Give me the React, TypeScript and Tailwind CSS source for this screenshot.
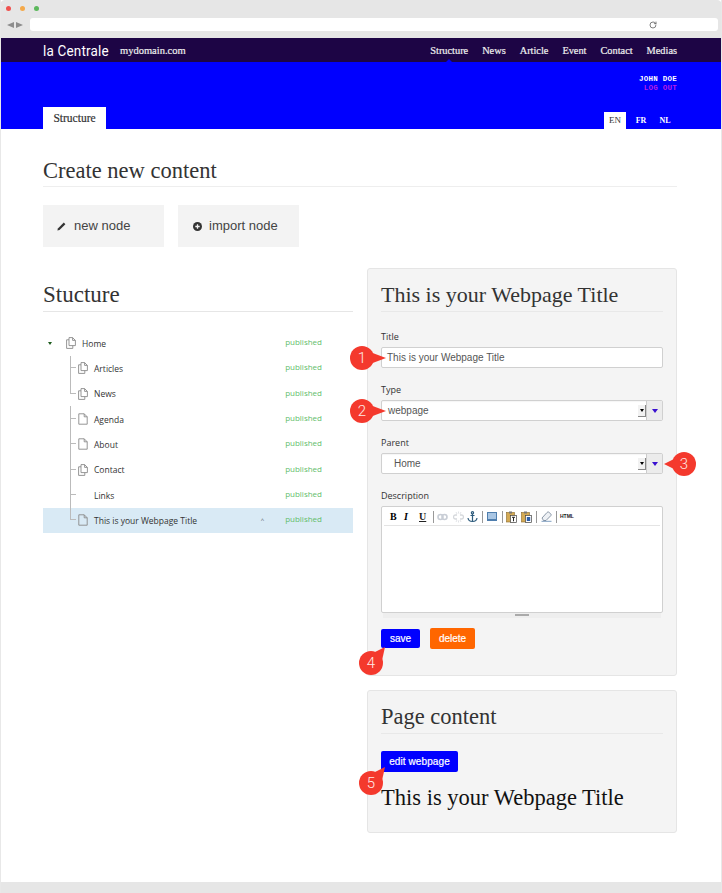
import { RotateCw } from "lucide-react";

const serif = "[font-family:'Liberation_Serif',serif]";

const treeRows = [
  { label: "Articles", icon: "pages", line: "mid" },
  { label: "News", icon: "pages", line: "end" },
  { label: "Agenda", icon: "page", line: "mid" },
  { label: "About", icon: "page", line: "mid" },
  { label: "Contact", icon: "pages", line: "mid" },
  { label: "Links", icon: "none", line: "mid" },
  { label: "This is your Webpage Title", icon: "page", line: "end", active: true },
];

const PageIcon = () => (
  <svg width="10" height="12" viewBox="0 0 10 12" fill="none" stroke="#8a8a8a" strokeWidth="0.9">
    <path d="M0.8 0.8h5.4l3 3v7.4h-8.4z" />
    <path d="M6.2 0.8v3h3" />
  </svg>
);

const PagesIcon = () => (
  <svg width="10" height="12" viewBox="0 0 10 12" fill="none" stroke="#8a8a8a" strokeWidth="0.9">
    <path d="M3 0.6h3.6l2.8 2.8v5.2h-6.4z" />
    <path d="M6.6 0.6v2.8h2.8" />
    <path d="M3 2.8h-2.4v8.6h6.2v-2.8" />
  </svg>
);

const Callout = ({ n, className, tail }: { n: number; className: string; tail: string }) => (
  <div className={`absolute w-[24px] h-[24px] ${className}`}>
    <svg className="absolute left-0 top-0 overflow-visible" width="24" height="24" viewBox="0 0 24 24">
      <path d={tail} fill="#f4392d" />
    </svg>
    <div className="absolute inset-0 rounded-full bg-[#f4392d] flex items-center justify-center text-[#ffe9e6] text-[15px] font-light font-['Roboto',sans-serif]">
      {n}
    </div>
  </div>
);

const SelectBox = ({ value, indent }: { value: string; indent: string }) => (
  <div className="mt-[4px] h-[21px] flex items-stretch bg-white border border-[#d0d0d0] rounded-[2px] shadow-[inset_0_1px_1px_rgba(0,0,0,0.04)]">
    <div className={`flex-1 flex items-center text-[10px] text-[#555] ${indent}`}>{value}</div>
    <div className="w-[8px] mt-[4px] h-[12px] bg-[#f2f2f2] border-r border-b border-[#888] flex items-center justify-center">
      <div className="w-0 h-0 border-x-[2px] border-x-transparent border-t-[3px] border-t-black" />
    </div>
    <div className="w-[16px] bg-[#ececec] border-l border-[#ccc] flex items-center justify-center">
      <div className="w-0 h-0 border-x-[3.5px] border-x-transparent border-t-[4px] border-t-[#3a10d0]" />
    </div>
  </div>
);

const Sep = () => <div className="w-px h-[12px] bg-[#999]" />;

const Toolbar = () => (
  <div className="relative h-[19px] mx-[2px] border-b border-[#e4e4e4] flex items-center pl-[6px] pt-[1px]">
    <span className={`${serif} w-[14px] text-[10px] font-bold text-black`}>B</span>
    <span className={`${serif} w-[15px] text-[10px] font-bold italic text-black`}>I</span>
    <span className={`${serif} w-[14px] text-[10px] font-bold underline text-[#222]`}>U</span>
    <Sep />
    <svg className="ml-[3px]" width="11" height="8" viewBox="0 0 11 8" fill="none" stroke="#c9ced6" strokeWidth="1.6">
      <rect x="1" y="1.5" width="5" height="5" rx="2.5" />
      <rect x="5" y="1.5" width="5" height="5" rx="2.5" />
    </svg>
    <svg className="ml-[5px]" width="11" height="12" viewBox="0 0 11 12" fill="none" stroke="#d5d8dc" strokeWidth="1.3">
      <path d="M4 4h-1.5a2 2 0 0 0 0 4h1.5M7 4h1.5a2 2 0 0 1 0 4h-1.5" />
      <path d="M3 1l1 2M8 1l-1 2M3 11l1-2M8 11l-1-2M5.5 0.5v2M5.5 9.500v2" strokeWidth="0.7" />
    </svg>
    <svg className="ml-[3px]" width="11" height="12" viewBox="0 0 11 12" fill="none" stroke="#2d5b7c" strokeWidth="1.2">
      <circle cx="5.500" cy="1.800" r="1.100" />
      <path d="M5.500 3v7.500M3.500 4.500h4M1 7c0.300 2.500 2.500 3.500 4.500 3.500s4.200-1 4.500-3.500" />
    </svg>
    <div className="ml-[4px]"><Sep /></div>
    <div className="ml-[4px] w-[10px] h-[9px] bg-[#a9c6e4] border border-[#4f7eae] border-b-2" />
    <div className="ml-[5px]"><Sep /></div>
    <svg className="ml-[3px]" width="11" height="12" viewBox="0 0 11 12">
      <rect x="0.500" y="1.500" width="8" height="9.500" fill="#d4aa55" stroke="#8a6a2a" strokeWidth="0.6" />
      <rect x="3" y="0.500" width="3" height="2" fill="#777" />
      <rect x="4.500" y="4.500" width="6" height="7" fill="#fff" stroke="#444" strokeWidth="0.7" />
      <path d="M6 6.300h3M7.500 6.300v4" stroke="#222" strokeWidth="1" />
    </svg>
    <svg className="ml-[4px]" width="11" height="12" viewBox="0 0 11 12">
      <rect x="0.500" y="1.500" width="8" height="9.500" fill="#d4aa55" stroke="#8a6a2a" strokeWidth="0.6" />
      <rect x="3" y="0.500" width="3" height="2" fill="#777" />
      <rect x="4.500" y="4.500" width="6" height="7" fill="#fff" stroke="#444" strokeWidth="0.7" />
      <rect x="5.800" y="6" width="3.400" height="4" fill="#2d5fa8" />
    </svg>
    <div className="ml-[4px]"><Sep /></div>
    <svg className="ml-[4px]" width="11" height="11" viewBox="0 0 11 11" fill="none">
      <path d="M1 7l5-5.500c0.800-0.700 1.500-0.700 2.200 0l1.500 1.300c0.600 0.600 0.600 1.300 0 2l-4.700 4.700h-2.500z" fill="#eef1f5" stroke="#6f7f92" strokeWidth="0.8" />
      <path d="M0.500 10.300h10" stroke="#5f86b0" strokeWidth="0.8" />
    </svg>
    <div className="ml-[4px]"><Sep /></div>
    <span className="ml-[3px] text-[5px] font-bold text-[#222] font-['Liberation_Sans',sans-serif]">HTML</span>
  </div>
);

export default function App() {
  return (
    <div className="relative w-[722px] h-[893px] overflow-hidden bg-white flex flex-col font-['Liberation_Sans',sans-serif] border-x border-[#e8e8e8]">
      {/* browser chrome */}
      <div className="h-[38px] shrink-0 bg-[#e6e6e6] rounded-t-[5px] -mx-px">
        <div className="flex gap-[9px] pl-[6px] pt-[5.500px]">
          <div className="w-[5px] h-[5px] rounded-full bg-[#f0524f]" />
          <div className="w-[5px] h-[5px] rounded-full bg-[#f4a94a]" />
          <div className="w-[5px] h-[5px] rounded-full bg-[#5cb85c]" />
        </div>
        <div className="flex items-center mt-[7.500px]">
          <div className="w-[30px] flex pl-[7px] gap-[2px]">
            <div className="w-0 h-0 border-y-[3.500px] border-y-transparent border-r-[7px] border-r-[#8d8d8d]" />
            <div className="w-0 h-0 border-y-[3.500px] border-y-transparent border-l-[7px] border-l-[#8d8d8d]" />
          </div>
          <div className="w-[688px] h-[13px] bg-white rounded-[3px] flex items-center justify-end pr-[61px]">
            <RotateCw size={8} strokeWidth={2.5} className="text-[#666]" />
          </div>
        </div>
      </div>

      {/* top nav */}
      <div className="relative h-[24px] shrink-0 bg-[#1d0545] flex items-center pl-[42px] pr-[44px] pt-[2px] text-white">
        <span className="text-[15px] leading-none tracking-[0.2px] font-['Roboto',sans-serif] scale-x-90 origin-left w-[77px] whitespace-nowrap">la Centrale</span>
        <span className={`${serif} text-[10.500px] font-normal [-webkit-text-stroke:0.2px_#eee] text-[#eee]`}>mydomain.com</span>
        <div className={`${serif} ml-auto flex gap-[14px] text-[10.330px] font-normal [-webkit-text-stroke:0.2px_#f0f0f0] text-[#f0f0f0]`}>
          <span>Structure</span>
          <span>News</span>
          <span>Article</span>
          <span>Event</span>
          <span>Contact</span>
          <span>Medias</span>
        </div>
        <div className="absolute left-[445px] bottom-0 w-0 h-0 border-x-[3px] border-x-transparent border-b-[3px] border-b-[#0000ff]" />
      </div>

      {/* blue header */}
      <div className="h-[67px] shrink-0 bg-[#0000ff] flex flex-col pl-[42px] pr-[44px]">
        <div className="mt-[13px] text-right text-[7.500px] leading-[9px] tracking-[0.25px] font-bold font-['Liberation_Mono',monospace]">
          <div className="text-white">JOHN DOE</div>
          <div className="text-[#b51ee6]">LOG OUT</div>
        </div>
        <div className="mt-auto flex items-end justify-between">
          <div className={`${serif} w-[63px] h-[22px] pt-[2px] bg-white flex items-center justify-center text-[11.500px] [-webkit-text-stroke:0.2px_#333] text-[#333]`}>Structure</div>
          <div className={`${serif} flex items-end text-[8px] font-bold text-white`}>
            <div className="w-[22px] h-[17px] bg-white text-[#333] flex items-center justify-center font-normal text-[9px]">EN</div>
            <div className="w-[24px] h-[17px] ml-[3px] flex items-center justify-center">FR</div>
            <div className="w-[24px] h-[17px] flex items-center justify-center">NL</div>
          </div>
        </div>
      </div>

      {/* content */}
      <div className="relative flex-1 pl-[42px] pr-[44px]">
        <h2 className={`${serif} mt-[28px] pt-[1px] pb-[3px] h-[30px] text-[22.500px] leading-[26px] text-[#333] border-b border-[#eee]`}>Create new content</h2>
        <div className="mt-[18px] flex gap-[14px]">
          <div className="w-[121px] h-[42px] bg-[#f3f3f3] flex items-center pl-[14px] gap-[8px] text-[13px] text-[#444]">
            <svg width="9" height="9" viewBox="0 0 9 9" fill="#333">
              <path d="M6.800 0.600l1.600 1.600-5.900 5.900-2.100 0.500 0.500-2.100z" />
            </svg>
            new node
          </div>
          <div className="w-[121px] h-[42px] bg-[#f3f3f3] flex items-center pl-[15px] gap-[7px] text-[13px] text-[#444]">
            <svg width="9" height="9" viewBox="0 0 9 9">
              <circle cx="4.500" cy="4.500" r="4.500" fill="#333" />
              <path d="M4.500 2.300v4.400M2.300 4.500h4.400" stroke="#f3f3f3" strokeWidth="1.300" />
            </svg>
            import node
          </div>
        </div>

        <div className="mt-[21px] flex gap-[14px] items-start">
          {/* tree */}
          <div className="w-[310px]">
            <h2 className={`${serif} mt-[14px] h-[30px] pb-[3px] text-[23px] leading-[26px] text-[#333] border-b border-[#e6e6e6]`}>Stucture</h2>
            <div className="mt-[18.500px] text-[8.500px] text-[#333] font-['Open_Sans',sans-serif]">
              <div className="h-[25.330px] flex items-center">
                <div className="w-[23px] pl-[5px]">
                  <div className="w-0 h-0 border-x-[2.500px] border-x-transparent border-t-[3px] border-t-[#1c5c1c]" />
                </div>
                <PagesIcon />
                <span className="ml-[6px] translate-y-[1px]">Home</span>
                <span className="ml-auto mr-[31px] text-[8px] text-[#62bd6a] -translate-y-px">published</span>
              </div>
              {treeRows.map((row) => (
                <div key={row.label} className={`h-[25.330px] flex items-center ${row.active ? "bg-[#d9eaf5]" : ""}`}>
                  <div className="w-[27px] ml-[27px] h-full flex flex-col shrink-0">
                    <div className="h-1/2 w-[6px] border-l border-b border-[#bbb]" />
                    {row.line === "mid" && <div className="h-1/2 w-[6px] border-l border-[#bbb]" />}
                  </div>
                  <div className="w-[16px] -ml-[19px] shrink-0 flex">
                    {row.icon === "page" && <PageIcon />}
                    {row.icon === "pages" && <PagesIcon />}
                  </div>
                  <span className="translate-y-[1px]">{row.label}</span>
                  {row.active && <span className="ml-auto text-[6px] text-[#556]">^</span>}
                  <span className={`${row.active ? "ml-[21px]" : "ml-auto"} mr-[31px] text-[8px] text-[#62bd6a] -translate-y-px`}>published</span>
                </div>
              ))}
            </div>
          </div>

          {/* right panels */}
          <div className="w-[310px]">
            <div className="h-[408px] bg-[#f4f4f4] border border-[#e5e5e5] rounded-[3px] px-[13px] pt-[13px]">
              <h2 className={`${serif} h-[30px] pb-[3px] text-[22px] leading-[26px] text-[#333] border-b border-[#e8e8e8]`}>This is your Webpage Title</h2>
              <div className="text-[9px] leading-[12px] text-[#333] font-['Open_Sans',sans-serif] mt-[19px]">Title</div>
              <div className="mt-[4px] h-[21px] flex items-center bg-white border border-[#d0d0d0] rounded-[2px] pl-[5px] text-[10px] text-[#555]">This is your Webpage Title</div>
              <div className="text-[9px] leading-[12px] text-[#333] font-['Open_Sans',sans-serif] mt-[16px]">Type</div>
              <SelectBox value="webpage" indent="pl-[6px]" />
              <div className="text-[9px] leading-[12px] text-[#333] font-['Open_Sans',sans-serif] mt-[16px]">Parent</div>
              <SelectBox value="Home" indent="pl-[12px]" />
              <div className="text-[9px] leading-[12px] text-[#333] font-['Open_Sans',sans-serif] mt-[16px]">Description</div>
              <div className="mt-[4px] h-[107px] bg-white border border-[#d0d0d0] rounded-[2px]">
                <Toolbar />
              </div>
              <div className="h-[5px] mx-[2px] bg-[#eee] flex justify-center">
                <div className="w-[14px] h-[2px] mt-[1px] bg-[#aaa]" />
              </div>
              <div className="mt-[10px] flex items-center gap-[10px] text-[10px] text-white [-webkit-text-stroke:0.2px_#fff]">
                <div className="w-[39px] h-[19px] bg-[#0000ff] rounded-[2px] flex items-center justify-center">save</div>
                <div className="w-[45px] h-[21px] bg-[#ff6600] rounded-[2px] flex items-center justify-center">delete</div>
              </div>
            </div>

            <div className="mt-[14px] h-[143px] bg-[#f4f4f4] border border-[#e5e5e5] rounded-[3px] px-[13px] pt-[13px]">
              <h2 className={`${serif} h-[30px] pb-[3px] text-[22.500px] leading-[26px] text-[#333] border-b border-[#e8e8e8]`}>Page content</h2>
              <div className="mt-[17px] w-[77px] h-[21px] bg-[#0000ff] rounded-[2px] flex items-center justify-center text-[10px] tracking-[0.1px] text-white [-webkit-text-stroke:0.2px_#fff]">edit webpage</div>
              <div className={`${serif} mt-[11px] text-[22.500px] leading-[30px] text-[#111]`}>This is your Webpage Title</div>
            </div>
          </div>
        </div>

        <Callout n={1} className="left-[349px] top-[217px]" tail="M20 6L36 12L20 18z" />
        <Callout n={2} className="left-[349px] top-[270px]" tail="M20 6L36 12L20 18z" />
        <Callout n={3} className="left-[671px] top-[323px]" tail="M4 6L-8 12L4 18z" />
        <Callout n={4} className="left-[358px] top-[522px]" tail="M14 2L26 -4L22 14z" />
        <Callout n={5} className="left-[358px] top-[642px]" tail="M14 2L26 -4L22 14z" />
      </div>

      {/* window bottom */}
      <div className="h-[11px] shrink-0 bg-[#e6e6e6] -mx-px" />
    </div>
  );
}
